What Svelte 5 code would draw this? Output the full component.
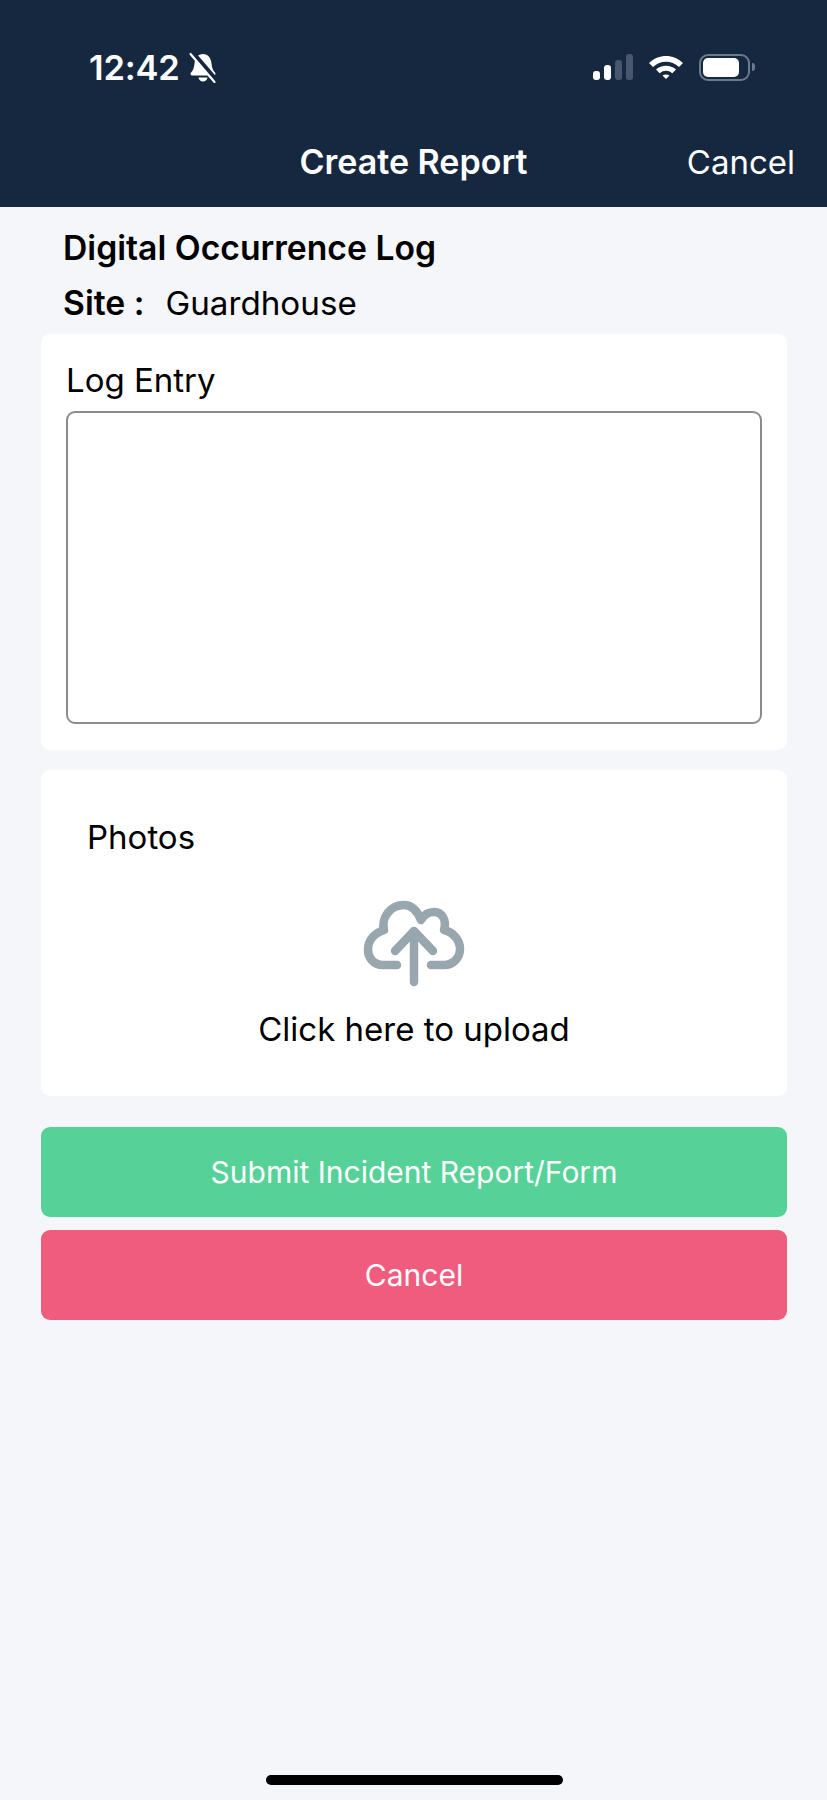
<script>
  const signal = [
    { h: 9, on: true },
    { h: 15, on: true },
    { h: 20, on: false },
    { h: 26, on: false }
  ];
</script>

<div class="page">
  <header class="top">
    <div class="status">
      <div class="clock">
        <span class="time">12:42</span>
        <svg class="bell" width="28" height="31" viewBox="0 0 28 31">
          <path d="M14 2c-5 0-8 4-8.500 9.500-.4 4.500-1.500 7-3.500 9-1 1.200-.4 3 1.200 3h21.600c1.600 0 2.200-1.800 1.200-3-2-2-3.100-4.500-3.500-9C22 6 19 2 14 2z" fill="#fff" />
          <path d="M9.500 25.500h9c-.5 2.500-2.300 4-4.500 4s-4-1.500-4.500-4z" fill="#fff" />
          <path d="M4 1l24 28" stroke="#16283f" stroke-width="4.500" />
          <path d="M1.500 2l24 28" stroke="#fff" stroke-width="2.200" stroke-linecap="round" />
        </svg>
      </div>
      <div class="indicators">
        <div class="signal">
          {#each signal as bar}
            <span class="bar" class:on={bar.on} style="height:{bar.h}px"></span>
          {/each}
        </div>
        <svg class="wifi" width="34" height="24" viewBox="0 0 34 24">
          <path d="M0 8C9.500-1.500 24.500-1.500 34 8L30 12C22.500 5 11.500 5 4 12z" fill="#fff" />
          <path d="M7 14.500C12.800 9.500 21.200 9.500 27 14.500L23.300 18.300C19.500 15 14.500 15 10.700 18.300z" fill="#fff" />
          <path d="M13.500 20.500c2-1.500 5-1.500 7 0L17 24z" fill="#fff" />
        </svg>
        <div class="battery">
          <div class="shell"><div class="level"></div></div>
          <span class="nub"></span>
        </div>
      </div>
    </div>
    <div class="nav">
      <span class="nav-title">Create Report</span>
      <span class="nav-cancel">Cancel</span>
    </div>
  </header>

  <main class="content">
    <div class="intro">
      <div class="form-name">Digital Occurrence Log</div>
      <div class="site"><b>Site :</b><span>Guardhouse</span></div>
    </div>

    <section class="card entry">
      <label for="log">Log Entry</label>
      <textarea id="log"></textarea>
    </section>

    <section class="card photos">
      <div class="photos-label">Photos</div>
      <div class="upload">
        <svg width="150" height="120" viewBox="0 0 150 120" fill="none" stroke="#98a6ae" stroke-width="8.500" stroke-linecap="round" stroke-linejoin="round">
          <path d="M57 85H43C33 85 28 77 28 70C28 60 35 53 44 50C41 38 50 25 64 25C72 25 77 30 81 40C85 33 90 32 94 32C102 32 107 40 104 50C113 52 120 60 120 69C120 78 113 85 104 85H91" />
          <path d="M74 102V52M55 71L74 51L93 71" />
        </svg>
        <div class="upload-text">Click here to upload</div>
      </div>
    </section>

    <button class="btn submit">Submit Incident Report/Form</button>
    <button class="btn cancel">Cancel</button>
  </main>

  <div class="home-bar"></div>
</div>

<style>
  :global(body) {
    margin: 0;
    background: #f4f6fa;
  }
  .page {
    height: 1800px;
    display: flex;
    flex-direction: column;
    font-family: Inter, "Noto Sans", sans-serif;
    color: #000;
    background: #f4f6fa;
  }
  .top {
    height: 207px;
    box-sizing: border-box;
    background: #16283f;
    color: #fff;
    padding-top: 47px;
  }
  .status {
    height: 40px;
    display: flex;
    align-items: center;
    justify-content: space-between;
    padding: 0 72px 0 89px;
  }
  .clock {
    display: flex;
    align-items: center;
    gap: 9px;
  }
  .time {
    font-size: 34.5px;
    font-weight: 600;
    letter-spacing: -0.2px;
  }
  .indicators {
    display: flex;
    align-items: center;
    gap: 16px;
  }
  .signal {
    display: flex;
    align-items: flex-end;
    gap: 4px;
    height: 26px;
  }
  .bar {
    width: 7px;
    border-radius: 3px;
    background: #47586d;
  }
  .bar.on {
    background: #fff;
  }
  .battery {
    display: flex;
    align-items: center;
    gap: 2px;
  }
  .shell {
    width: 51px;
    height: 27px;
    box-sizing: border-box;
    padding: 2px;
    border: 2px solid #6b7a8c;
    border-radius: 9px;
  }
  .level {
    height: 100%;
    width: 36px;
    background: #fff;
    border-radius: 5px;
  }
  .nub {
    width: 3px;
    height: 8px;
    background: #6b7a8c;
    border-radius: 0 3px 3px 0;
  }
  .nav {
    position: relative;
    height: 40px;
    margin-top: 55px;
    display: flex;
    align-items: center;
    justify-content: center;
  }
  .nav-title {
    margin-bottom: 2px;
    font-size: 34px;
    font-weight: 600;
  }
  .nav-cancel {
    position: absolute;
    right: 32px;
    font-size: 33px;
  }
  .content {
    flex: 1;
    padding: 0 40px 0 41px;
    display: flex;
    flex-direction: column;
  }
  .intro {
    padding: 21px 0 0 22px;
    height: 127px;
    box-sizing: border-box;
  }
  .form-name {
    font-size: 33.7px;
    font-weight: 600;
    line-height: 40px;
  }
  .site {
    margin-top: 15px;
    display: flex;
    font-size: 33.2px;
    line-height: 40px;
    gap: 21px;
  }
  .site b {
    font-size: 33.7px;
    font-weight: 600;
  }
  .card {
    background: #fff;
    border-radius: 9px;
    box-sizing: border-box;
  }
  .entry {
    height: 416px;
    padding: 26px 25px 0;
    display: flex;
    flex-direction: column;
  }
  label {
    font-size: 33px;
    line-height: 40px;
  }
  textarea {
    margin-top: 11px;
    height: 313px;
    width: 100%;
    box-sizing: border-box;
    border: 2px solid #8c8c8c;
    border-radius: 9px;
    background: #fff;
    resize: none;
    outline: none;
  }
  .photos {
    margin-top: 20px;
    height: 326px;
    padding: 47px 0 0 46px;
  }
  .photos-label {
    font-size: 33px;
    line-height: 40px;
  }
  .upload {
    margin-left: -46px;
    display: flex;
    flex-direction: column;
    align-items: center;
  }
  .upload svg {
    margin-top: 23px;
    margin-left: 1px;
    display: block;
  }
  .upload-text {
    margin-top: 9px;
    font-size: 33px;
    line-height: 40px;
  }
  .btn {
    border: 0;
    height: 90px;
    border-radius: 9px;
    color: #fff;
    font-family: inherit;
    font-size: 30px;
    padding: 0;
  }
  .submit {
    margin-top: 31px;
    background: #56d198;
  }
  .cancel {
    margin-top: 13px;
    background: #f05c7e;
  }
  .home-bar {
    width: 297px;
    height: 10px;
    margin: 0 0 15px 266px;
    background: #000;
    border-radius: 5px;
  }
</style>
